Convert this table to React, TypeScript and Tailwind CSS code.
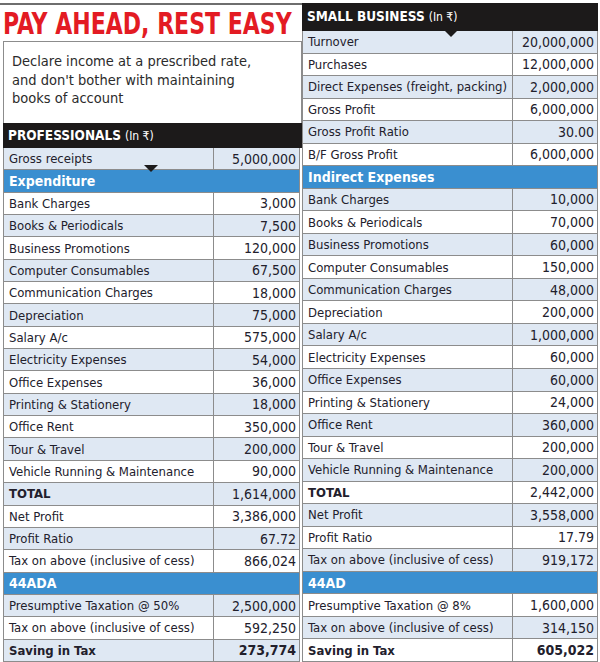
import React from "react";

type Row = { label: string; value?: string; kind?: "head" | "total" | "save" };

const professionals: Row[] = [
	{ label: "Gross receipts", value: "5,000,000" },
	{ label: "Expenditure", kind: "head" },
	{ label: "Bank Charges", value: "3,000" },
	{ label: "Books & Periodicals", value: "7,500" },
	{ label: "Business Promotions", value: "120,000" },
	{ label: "Computer Consumables", value: "67,500" },
	{ label: "Communication Charges", value: "18,000" },
	{ label: "Depreciation", value: "75,000" },
	{ label: "Salary A/c", value: "575,000" },
	{ label: "Electricity Expenses", value: "54,000" },
	{ label: "Office Expenses", value: "36,000" },
	{ label: "Printing & Stationery", value: "18,000" },
	{ label: "Office Rent", value: "350,000" },
	{ label: "Tour & Travel", value: "200,000" },
	{ label: "Vehicle Running & Maintenance", value: "90,000" },
	{ label: "TOTAL", value: "1,614,000", kind: "total" },
	{ label: "Net Profit", value: "3,386,000" },
	{ label: "Profit Ratio", value: "67.72" },
	{ label: "Tax on above (inclusive of cess)", value: "866,024" },
	{ label: "44ADA", kind: "head" },
	{ label: "Presumptive Taxation @ 50%", value: "2,500,000" },
	{ label: "Tax on above (inclusive of cess)", value: "592,250" },
	{ label: "Saving in Tax", value: "273,774", kind: "save" },
];

const smallBusiness: Row[] = [
	{ label: "Turnover", value: "20,000,000" },
	{ label: "Purchases", value: "12,000,000" },
	{ label: "Direct Expenses (freight, packing)", value: "2,000,000" },
	{ label: "Gross Profit", value: "6,000,000" },
	{ label: "Gross Profit Ratio", value: "30.00" },
	{ label: "B/F Gross Profit", value: "6,000,000" },
	{ label: "Indirect Expenses", kind: "head" },
	{ label: "Bank Charges", value: "10,000" },
	{ label: "Books & Periodicals", value: "70,000" },
	{ label: "Business Promotions", value: "60,000" },
	{ label: "Computer Consumables", value: "150,000" },
	{ label: "Communication Charges", value: "48,000" },
	{ label: "Depreciation", value: "200,000" },
	{ label: "Salary A/c", value: "1,000,000" },
	{ label: "Electricity Expenses", value: "60,000" },
	{ label: "Office Expenses", value: "60,000" },
	{ label: "Printing & Stationery", value: "24,000" },
	{ label: "Office Rent", value: "360,000" },
	{ label: "Tour & Travel", value: "200,000" },
	{ label: "Vehicle Running & Maintenance", value: "200,000" },
	{ label: "TOTAL", value: "2,442,000", kind: "total" },
	{ label: "Net Profit", value: "3,558,000" },
	{ label: "Profit Ratio", value: "17.79" },
	{ label: "Tax on above (inclusive of cess)", value: "919,172" },
	{ label: "44AD", kind: "head" },
	{ label: "Presumptive Taxation @ 8%", value: "1,600,000" },
	{ label: "Tax on above (inclusive of cess)", value: "314,150" },
	{ label: "Saving in Tax", value: "605,022", kind: "save" },
];

const Table = ({ rows }: { rows: Row[] }) => {
	let stripe = 0;
	return (
		<div className="flex-1 min-h-0 flex flex-col border-l border-r border-[#8c8c8c]">
			{rows.map((row, i) => {
				if (row.kind === "head") {
					return (
						<div key={i} className="flex-1 basis-0 min-h-0 flex items-center bg-[#3a8fd0] border-b border-[#8c8c8c] pl-[5px] text-white font-bold text-[14px]">
							{row.label}
						</div>
					);
				}
				const blue = stripe++ % 2 === 0;
				return (
					<div key={i} className={`flex-1 basis-0 min-h-0 flex whitespace-nowrap border-b border-[#8c8c8c] ${blue ? "bg-[#dfe8f3]" : "bg-white"}`}>
						<div className={`w-[210px] flex items-center pl-[5px] border-r border-[#8c8c8c] text-[13px] ${row.kind ? "font-bold" : ""}`}>
							{row.label}
						</div>
						<div className={`flex-1 flex items-center justify-end pr-[3px] text-[14px] ${row.kind === "save" ? "font-bold" : ""}`}>
							{row.value}
						</div>
					</div>
				);
			})}
		</div>
	);
};

const Pointer = () => (
	<div className="w-0 h-0 border-l-[7px] border-r-[7px] border-t-[7px] border-l-transparent border-r-transparent border-t-[#1c1a1a]" />
);

export default function App() {
	return (
		<div className="w-[600px] h-[662px] overflow-hidden bg-white flex leading-none text-[#22202c] font-['DejaVu_Sans_Condensed','DejaVu_Sans',sans-serif]">
			{/* left: professionals */}
			<div className="w-[302px] flex flex-col pt-[3px]">
				<div className="border-t-2 border-[#6e6e6e] h-[38px] flex items-center pl-[3px] whitespace-nowrap">
					<h1 className="origin-left scale-x-[0.79] text-[#e31b23] font-bold text-[31px]">PAY AHEAD, REST EASY</h1>
				</div>
				<div className="ml-[3px] h-[82px] border border-[#8c8c8c] border-b-0 px-[8px] pt-[10px] text-[14.5px] leading-[18.5px] text-[#2b2b2b]">
					Declare income at a prescribed rate,
					<br />
					and don't bother with maintaining
					<br />
					books of account
				</div>
				<div className="ml-[3px] h-[25px] bg-[#1c1a1a] flex items-center pl-[5px] text-white">
					<span className="font-bold text-[13.5px]">PROFESSIONALS</span>
					<span className="ml-[4px] text-[12px]">(In ₹)</span>
				</div>
				<div className="relative ml-[3px] mr-[2px] flex-1 min-h-0 flex flex-col">
					<Table rows={professionals} />
					<div className="absolute left-[141px] top-[17px]">
						<Pointer />
					</div>
				</div>
			</div>

			{/* right: small business */}
			<div className="w-[298px] flex flex-col pt-[3px] pr-[2px]">
				<div className="relative h-[28px] bg-[#1c1a1a] flex items-center pl-[5px] text-white">
					<span className="font-bold text-[13.5px]">SMALL BUSINESS</span>
					<span className="ml-[4px] text-[12px]">(In ₹)</span>
					<div className="absolute left-[142px] top-[27px]">
						<Pointer />
					</div>
				</div>
				<div className="flex-1 min-h-0 flex flex-col">
					<Table rows={smallBusiness} />
				</div>
			</div>
		</div>
	);
}
